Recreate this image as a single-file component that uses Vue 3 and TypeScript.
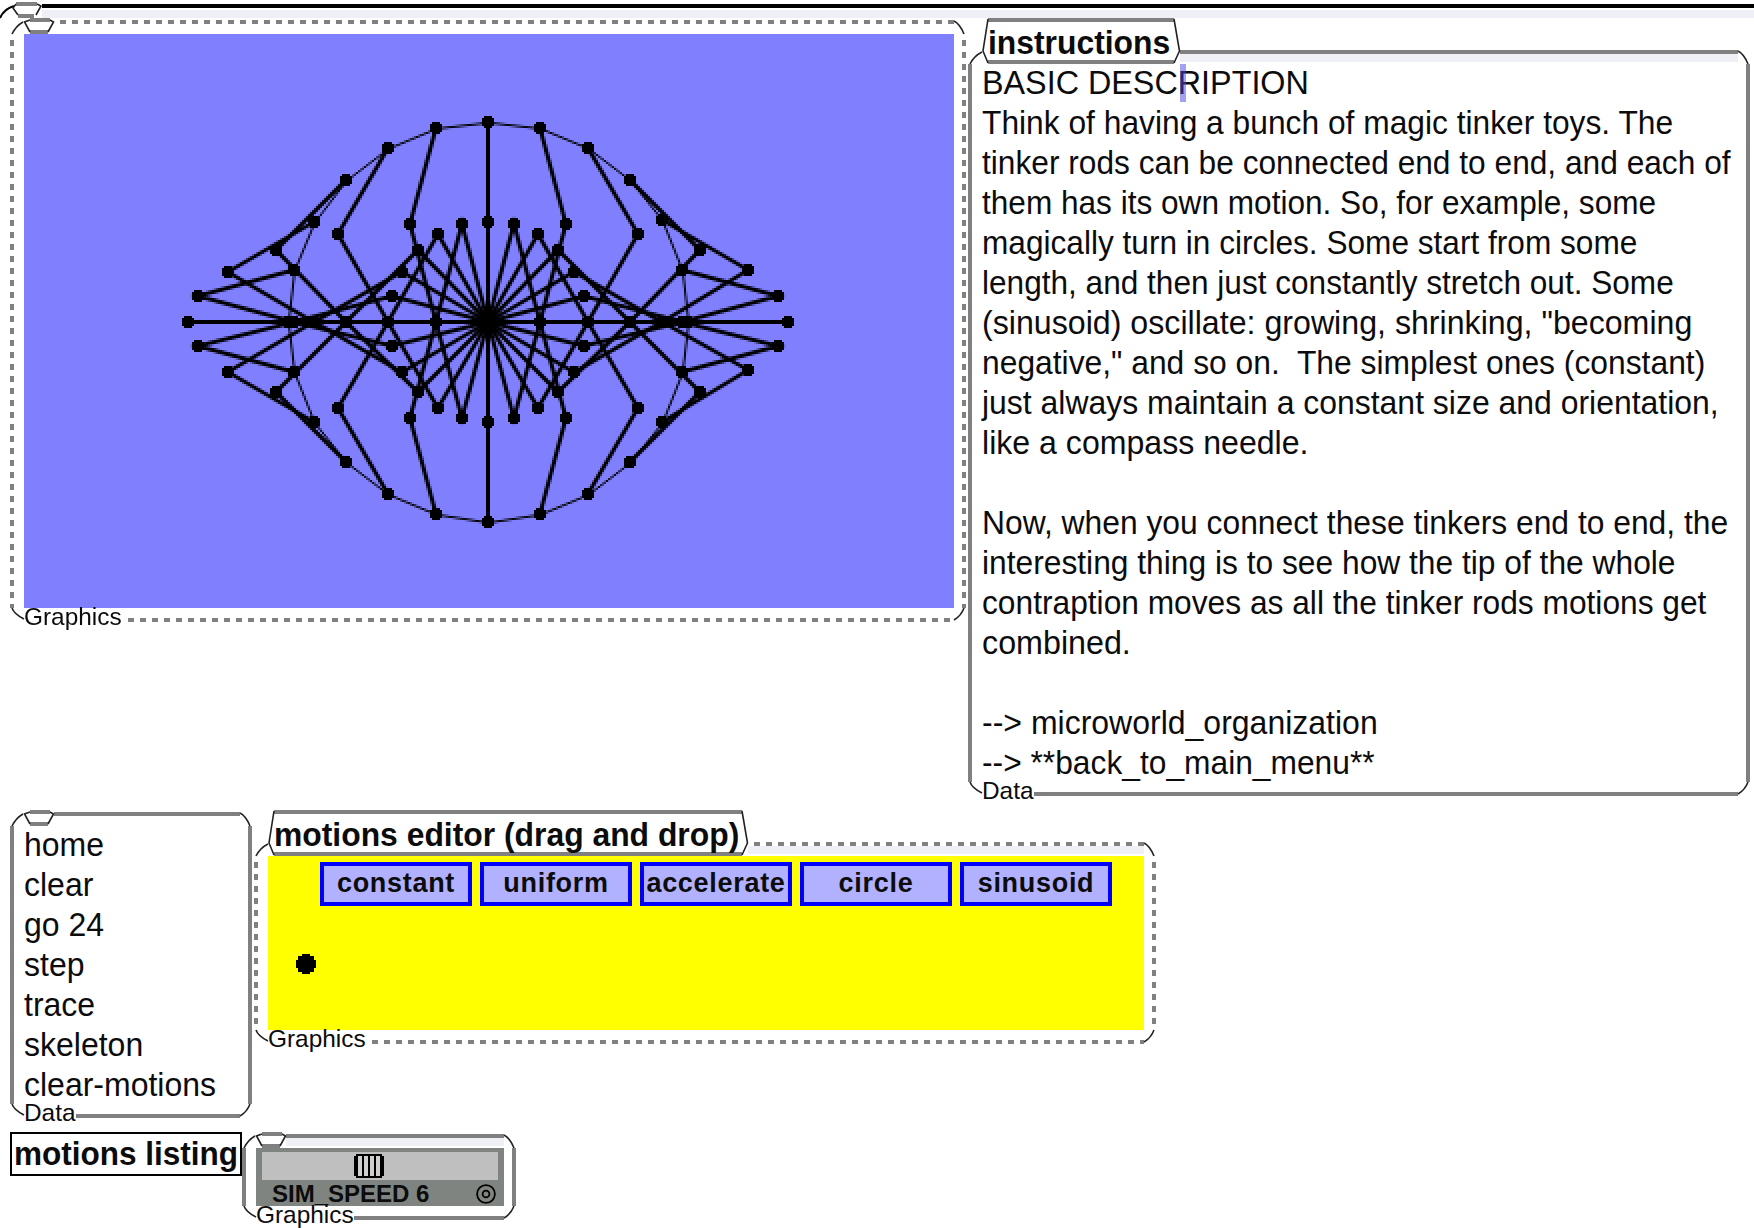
<script setup lang="ts">
import { onMounted, ref } from 'vue'

interface Frame {
  w: number
  h: number
  tab: number
  label: string
  title?: string
  dashed?: boolean
  strip?: boolean
}

const frames: Record<string, Frame> = {
  graphics: { w: 956, h: 602, tab: 44, label: 'Graphics', dashed: true },
  instructions: { w: 782, h: 746, tab: 212, label: 'Data', title: 'instructions', strip: true },
  commands: { w: 242, h: 306, tab: 44, label: 'Data' },
  editor: { w: 902, h: 202, tab: 494, label: 'Graphics', title: 'motions editor (drag and drop)', dashed: true, strip: true },
  slider: { w: 274, h: 86, tab: 44, label: 'Graphics', strip: true },
}

const labelEnd = (f: Frame) => (f.label === 'Data' ? 66 : 112)

const edges = (f: Frame) => [
  `M${f.tab} 2H${f.w - 12}`,
  `M2 14V${f.h - 14}`,
  `M${f.w - 2} 14V${f.h - 14}`,
  `M${labelEnd(f)} ${f.h - 2}H${f.w - 12}`,
]

const corners = (f: Frame) =>
  `M2 14Q6 6 ${f.title ? 14 : 13} 2` +
  `M${f.w - 12} 1Q${f.w - 6} 4 ${f.w - 2} 14` +
  `M2 ${f.h - 14}Q4 ${f.h - 8} 14 ${f.h - 3}` +
  `M${f.w - 2} ${f.h - 14}Q${f.w - 5} ${f.h - 6} ${f.w - 12} ${f.h - 2}`

const tabBars = (f: Frame) =>
  f.title ? `M20 -30H${f.tab - 6}M20 12H${f.tab - 6}` : `M20 0H40M20 12H38`

const tabSides = (f: Frame) =>
  f.title
    ? `M20 -31L15 1L20 13M${f.tab - 6} -31L${f.tab - 0.5} 1L${f.tab - 6} 13`
    : `M20 0L14.5 2L20 12M40 0L43.5 2L38 12`

// Text of each line and its horizontal stretch.
const instructions: [string, number][] = [
  ['BASIC DESCRIPTION', 1.01],
  ['Think of having a bunch of magic tinker toys. The', 0.992],
  ['tinker rods can be connected end to end, and each of', 0.99],
  ['them has its own motion. So, for example, some', 0.987],
  ['magically turn in circles. Some start from some', 0.988],
  ['length, and then just constantly stretch out. Some', 0.987],
  ['(sinusoid) oscillate: growing, shrinking, "becoming', 1.005],
  ['negative," and so on.  The simplest ones (constant)', 0.994],
  ['just always maintain a constant size and orientation,', 0.998],
  ['like a compass needle.', 1.003],
  ['', 1],
  ['Now, when you connect these tinkers end to end, the', 0.994],
  ['interesting thing is to see how the tip of the whole', 0.992],
  ['contraption moves as all the tinker rods motions get', 0.991],
  ['combined.', 1.008],
  ['', 1],
  ['--> microworld_organization', 1],
  ['--> **back_to_main_menu**', 0.992],
]
const commands = ['home', 'clear', 'go 24', 'step', 'trace', 'skeleton', 'clear-motions']
const motions = ['constant', 'uniform', 'accelerate', 'circle', 'sinusoid']

const bodySize = 33.5
const stretch = (k: number) => ({ transform: `scaleX(${((k * 32) / bodySize).toFixed(4)})` })

const stage = ref<HTMLCanvasElement | null>(null)

onMounted(() => {
  const ctx = stage.value?.getContext('2d')
  if (!ctx) return
  const trace: number[][] = []
  const place = (x: number, y: number, nudge = 0) => [
    Math.floor(232.5 + x * 50 + 1e-6),
    Math.floor(144 - y * 50 + 1e-6 - nudge),
  ]
  // Each step links four rods of equal length; the last tip leaves the trace.
  for (let deg = 0; deg < 360; deg += 15) {
    const c = Math.cos((deg * Math.PI) / 180)
    const s = Math.sin((deg * Math.PI) / 180)
    const joints = [
      place(0, 0),
      place(c, s),
      place(2 * c, 0),
      place(3 * c, s, deg === 30 || deg === 330 ? 0.01 : 0),
      place(2 * c, 2 * s, deg === 30 ? 0.01 : 0),
    ]
    trace.push(joints[4])
    ctx.lineWidth = 2
    ctx.beginPath()
    joints.forEach(([x, y], i) => (i ? ctx.lineTo(x, y) : ctx.moveTo(x, y)))
    ctx.stroke()
    for (const [x, y] of joints) {
      ctx.fillRect(x - 3, y - 2, 6, 4)
      ctx.fillRect(x - 2, y - 3, 4, 6)
    }
  }
  ctx.lineWidth = 1
  ctx.beginPath()
  trace.forEach(([x, y]) => ctx.lineTo(x + 0.4, y + 0.4))
  ctx.closePath()
  ctx.stroke()
})
</script>

<template>
  <main class="world">
    <svg class="world-frame" width="1754" height="24" fill="none">
      <rect x="42" y="10" width="1712" height="8" fill="#efeff6" />
      <path d="M42 6H1754" stroke="#000" stroke-width="4" />
      <path d="M0 18Q4 9 14 6" stroke="#000" stroke-width="2" />
      <path d="M16 4H37M18 16H34" stroke="#808080" stroke-width="4" />
      <path d="M16 4L13 8L18 15M37 4L41 6L36 15" stroke="#222" stroke-width="1.6" />
    </svg>

    <div class="row row-top">
      <section class="box" :style="{ width: frames.graphics.w + 'px', height: frames.graphics.h + 'px' }">
        <svg class="frame" :width="frames.graphics.w" :height="frames.graphics.h" fill="none">
          <path v-for="d in edges(frames.graphics)" :key="d" :d="d" class="edge dashed" />
          <path :d="corners(frames.graphics)" class="thin" />
          <path :d="tabBars(frames.graphics)" class="edge" />
          <path :d="tabSides(frames.graphics)" class="thin" />
        </svg>
        <canvas ref="stage" class="stage" width="465" height="287"></canvas>
        <span class="label">{{ frames.graphics.label }}</span>
      </section>

      <section class="box low" :style="{ width: frames.instructions.w + 'px', height: frames.instructions.h + 'px' }">
        <svg class="frame" :width="frames.instructions.w" :height="frames.instructions.h" fill="none">
          <rect :x="frames.instructions.tab" y="4" :width="frames.instructions.w - 12 - frames.instructions.tab" height="8" fill="#efeff6" />
          <path v-for="d in edges(frames.instructions)" :key="d" :d="d" class="edge" />
          <path :d="corners(frames.instructions)" class="thin" />
          <path :d="tabBars(frames.instructions)" class="edge" />
          <path :d="tabSides(frames.instructions)" class="thin" />
        </svg>
        <h2 class="title">{{ frames.instructions.title }}</h2>
        <div class="lines">
          <p v-for="([line, k], i) in instructions" :key="i" :style="stretch(k)">{{ line }}</p>
        </div>
        <i class="cursor"></i>
        <span class="label">{{ frames.instructions.label }}</span>
      </section>
    </div>

    <div class="row row-middle">
      <section class="box" :style="{ width: frames.commands.w + 'px', height: frames.commands.h + 'px' }">
        <svg class="frame" :width="frames.commands.w" :height="frames.commands.h" fill="none">
          <path v-for="d in edges(frames.commands)" :key="d" :d="d" class="edge" />
          <path :d="corners(frames.commands)" class="thin" />
          <path :d="tabBars(frames.commands)" class="edge" />
          <path :d="tabSides(frames.commands)" class="thin" />
        </svg>
        <div class="lines">
          <p v-for="c in commands" :key="c" :style="stretch(1)">{{ c }}</p>
        </div>
        <span class="label">{{ frames.commands.label }}</span>
      </section>

      <section class="box low" :style="{ width: frames.editor.w + 'px', height: frames.editor.h + 'px' }">
        <svg class="frame" :width="frames.editor.w" :height="frames.editor.h" fill="none">
          <rect :x="frames.editor.tab" y="4" :width="frames.editor.w - 12 - frames.editor.tab" height="8" fill="#efeff6" />
          <path v-for="d in edges(frames.editor)" :key="d" :d="d" class="edge dashed" />
          <path :d="corners(frames.editor)" class="thin" />
          <path :d="tabBars(frames.editor)" class="edge" />
          <path :d="tabSides(frames.editor)" class="thin" />
        </svg>
        <h2 class="title">{{ frames.editor.title }}</h2>
        <div class="palette">
          <div class="buttons">
            <button v-for="m in motions" :key="m" type="button">{{ m }}</button>
          </div>
          <svg class="ball" width="20" height="20" shape-rendering="crispEdges">
            <path d="M6 0h8v2h4v4h2v8h-2v4h-4v2h-8v-2h-4v-4h-2v-8h2v-4h4z" />
          </svg>
        </div>
        <span class="label">{{ frames.editor.label }}</span>
      </section>
    </div>

    <div class="row row-bottom">
      <div class="listing"><span>motions listing</span></div>
      <section class="box speed" :style="{ width: frames.slider.w + 'px', height: frames.slider.h + 'px' }">
        <svg class="frame" :width="frames.slider.w" :height="frames.slider.h" fill="none">
          <rect :x="frames.slider.tab" y="4" :width="frames.slider.w - 12 - frames.slider.tab" height="8" fill="#efeff6" />
          <path v-for="d in edges(frames.slider)" :key="d" :d="d" class="edge" />
          <path :d="corners(frames.slider)" class="thin" />
          <path :d="tabBars(frames.slider)" class="edge" />
          <path :d="tabSides(frames.slider)" class="thin" />
        </svg>
        <div class="slider">
          <div class="track">
            <svg width="30" height="24" shape-rendering="crispEdges">
              <path d="M2 0H28V2H30V22H28V24H2V22H0V2H2Z" />
              <path d="M4 2h4v20h-4zM10 2h4v20h-4zM16 2h4v20h-4zM22 2h4v20h-4z" fill="#cfcfcf" />
            </svg>
          </div>
          <div class="readout">
            <span>SIM_SPEED 6</span>
            <svg width="20" height="20" fill="none" stroke="#000" stroke-width="1.8">
              <circle cx="10" cy="10" r="8.9" />
              <circle cx="10" cy="10" r="3.4" />
            </svg>
          </div>
        </div>
        <span class="label">{{ frames.slider.label }}</span>
      </section>
    </div>
  </main>
</template>

<style>
body {
  margin: 0;
  background: #fff;
}
</style>

<style scoped>
.world {
  position: relative;
  box-sizing: border-box;
  width: 1754px;
  height: 1228px;
  padding: 20px 0 0 10px;
  overflow: hidden;
  background: #fff;
  color: #0c0c0c;
  font-family: 'Liberation Sans', Arial, sans-serif;
}
.world-frame {
  position: absolute;
  top: 0;
  left: 0;
}
.row {
  display: flex;
  align-items: flex-start;
  gap: 2px;
}
.row-top {
  height: 776px;
}
.row-middle {
  margin-top: 16px;
  height: 306px;
}
.row-bottom {
  margin-top: 14px;
  gap: 0;
}
.box {
  position: relative;
  flex: none;
  box-sizing: border-box;
  padding: 14px 12px 14px 14px;
}
.low {
  margin-top: 30px;
}
.speed {
  margin-top: 2px;
}
.frame {
  position: absolute;
  top: 0;
  left: 0;
  overflow: visible;
}
.edge {
  stroke: #808080;
  stroke-width: 4;
}
.dashed {
  stroke-dasharray: 0 6 6 0;
}
.thin {
  stroke: #222;
  stroke-width: 1.6;
}
.stage {
  position: relative;
  display: block;
  width: 930px;
  height: 574px;
  background: #8080ff;
  image-rendering: pixelated;
}
.title {
  position: absolute;
  top: -26px;
  left: 20px;
  margin: 0;
  font-size: 33px;
  line-height: 37px;
  font-weight: bold;
  white-space: pre;
  transform: scaleX(0.965);
  transform-origin: 0 0;
}
.label {
  position: absolute;
  left: 14px;
  bottom: -8px;
  font-size: 24.4px;
  line-height: 27px;
}
.lines {
  position: relative;
  margin-top: -1px;
  font-size: 33.5px;
  line-height: 40px;
  white-space: pre;
}
.lines p {
  width: max-content;
  height: 40px;
  margin: 0;
  transform-origin: 0 0;
}
.cursor {
  position: absolute;
  left: 212px;
  top: 14px;
  width: 6px;
  height: 38px;
  background: rgba(70, 70, 230, 0.5);
}
.palette {
  position: relative;
  height: 174px;
  background: #ff0;
  overflow: hidden;
}
.buttons {
  display: flex;
  gap: 8px;
  margin: 6px 0 0 52px;
}
.buttons button {
  flex: none;
  width: 152px;
  height: 44px;
  padding: 0 0 3px;
  border: 4px solid #00f;
  border-radius: 0;
  background: #b1b1ff;
  color: #0c0c0c;
  font: bold 27px/32px 'Liberation Sans', Arial, sans-serif;
  letter-spacing: 0.7px;
  display: flex;
  align-items: center;
  justify-content: center;
}
.ball {
  display: block;
  margin: 48px 0 0 28px;
}
.listing {
  box-sizing: border-box;
  width: 232px;
  height: 44px;
  padding-left: 2px;
  border: 2px solid #000;
  font-size: 33px;
  line-height: 40px;
  font-weight: bold;
  white-space: pre;
}
.listing span {
  display: inline-block;
  transform: scaleX(0.955);
  transform-origin: 0 0;
}
.slider {
  position: relative;
  box-sizing: border-box;
  height: 58px;
  padding: 4px 6px 0;
  background: #808480;
}
.track {
  height: 28px;
  background: #bfbfbf;
}
.track svg {
  display: block;
  margin-left: 92px;
  position: relative;
  top: 2px;
}
.readout {
  display: flex;
  justify-content: space-between;
  padding: 0 2px 0 10px;
  height: 26px;
  font-size: 24px;
  line-height: 27px;
  font-weight: bold;
}
.readout svg {
  margin-top: 4px;
}
</style>
